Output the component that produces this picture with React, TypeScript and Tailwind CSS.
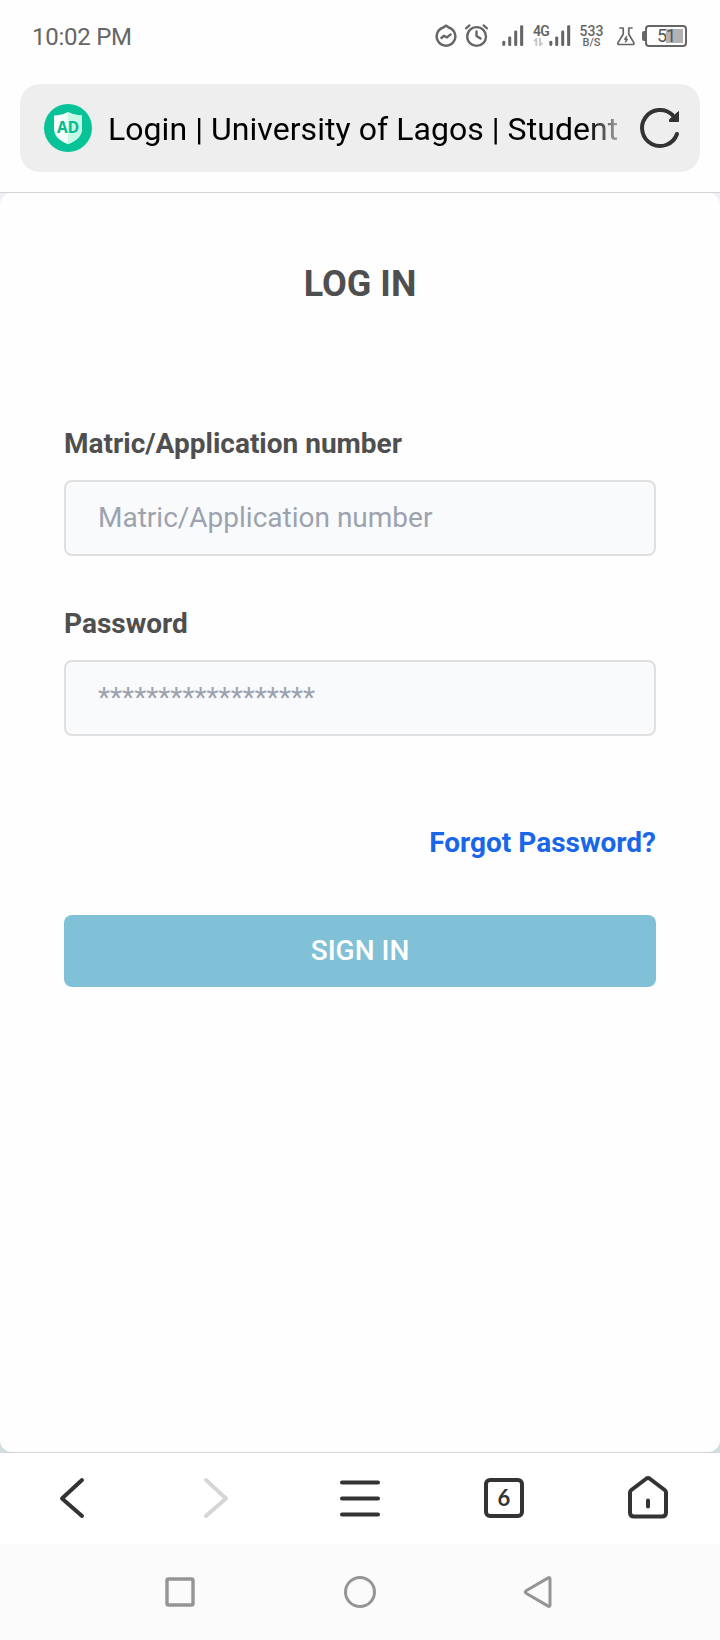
import React from "react";

function SignalBars() {
  return (
    <svg width="22" height="22" viewBox="0 0 22 22" fill="#666">
      <rect x="0.3" y="16.8" width="3" height="5.2" rx="1.4" />
      <rect x="6.2" y="12.4" width="3" height="9.6" rx="1.2" />
      <rect x="12.2" y="6.6" width="3" height="15.4" rx="1.2" />
      <rect x="18.1" y="1.2" width="3.1" height="20.8" rx="1.2" />
    </svg>
  );
}

function StatusBar() {
  return (
    <header className="flex h-[72px] items-start justify-between pl-8 pr-[33px] text-[#666]">
      <span className="mt-[23px] text-[24px] leading-[28px] tracking-[-0.25px]">10:02 PM</span>
      <div className="mt-6 flex h-6 items-start">
        <svg width="24" height="24" viewBox="0 0 24 24" fill="none" stroke="#666" strokeWidth="2.4" strokeLinecap="round" strokeLinejoin="round">
          <path d="M9.3 3.5 12 1.6l2.7 1.9A9.3 9.3 0 1 1 9.3 3.5Z" />
          <path d="M7.4 14 9.8 11.800 13 13.400 16.700 10.400" strokeWidth="2.4" />
        </svg>
        <svg className="ml-[6px]" width="26" height="24" viewBox="0 0 26 24" fill="none" stroke="#666" strokeWidth="2.4" strokeLinecap="round">
          <circle cx="12.6" cy="12.5" r="9.4" />
          <path d="M12.5 7.5V12l4 2.6" strokeLinejoin="round" />
          <path d="M2 4.3 5.4 1.4M19.6 1.4 23 4.3" strokeWidth="2.2" />
        </svg>
        <span className="ml-[12px]"><SignalBars /></span>
        <div className="ml-[9px] flex w-[16px] flex-col">
          <span className="mt-[1px] whitespace-nowrap text-[14px] font-semibold leading-[13px] tracking-[-0.7px]">4G</span>
          <svg width="12" height="8" viewBox="0 0 12 8" fill="none" stroke="#c6c6c6" strokeWidth="1.9">
            <path d="M3.3 8V1.2L1 3M7 0v7.2L9.4 5" />
          </svg>
        </div>
        <SignalBars />
        <div className="ml-[8px] flex w-[25px] flex-col items-center">
          <span className="mt-[1px] text-[14px] font-medium leading-[13px]">533</span>
          <span className="text-[11px] font-medium leading-[10px]">B/S</span>
        </div>
        <svg className="ml-[12px]" width="20" height="24" viewBox="0 0 20 24" fill="none" stroke="#666" strokeWidth="1.7" strokeLinecap="round" strokeLinejoin="round">
          <path d="M4 4h3.2v6.2L2 18.6Q1.2 20.5 3.2 20.5H16.6Q18.6 20.5 17.8 18.6L12.8 10.2V4H16" />
          <path d="M10.6 12.600 8.800 15.2h2.500L9.500 17.800" strokeWidth="1.500" />
        </svg>
        <div className="ml-[6px] mt-[1px] flex items-center">
          <span className="h-[10px] w-[3px] rounded-l-[2px] bg-[#666]" />
          <div className="flex h-[22px] w-[42px] items-center justify-end rounded-[4px] border-2 border-[#666] pr-[2px] text-[18px] leading-[18px] text-[#555]">
            <span className="w-[9px]">5</span>
            <span className="h-[14px] w-[17px] bg-[#b2b2b2] leading-[14px]">1</span>
          </div>
        </div>
      </div>
    </header>
  );
}

function AddressBar() {
  return (
    <div className="mx-5 mt-3 flex h-[88px] items-center rounded-[20px] bg-[#eeeeee] pl-6 pr-5">
      <svg width="48" height="48" viewBox="0 0 48 48">
        <circle cx="24" cy="24" r="24" fill="#07c397" />
        <path d="M24 8c4 2.600 9 3.200 14 3.400V24c0 8-5 12.500-14 16.300C15 36.500 10 32 10 24V11.400C15 11.200 20 10.600 24 8Z" fill="#f4fffb" />
        <path d="M24 8c4 2.600 9 3.200 14 3.400V24c0 8-5 12.500-14 16.300Z" fill="#c4fae5" />
        <text x="24" y="28.600" textAnchor="middle" fontFamily="Noto Sans" fontWeight="700" fontSize="15.500" fill="#0cb98d">AD</text>
      </svg>
      <div className="ml-4 mt-[2px] w-[510px] overflow-hidden whitespace-nowrap bg-gradient-to-r from-black from-[93%] to-[#aaaaaa] bg-clip-text text-[32px] leading-[44px] tracking-[0.05px] text-transparent">
        Login | University of Lagos | Student
      </div>
      <svg className="ml-auto" width="44" height="44" viewBox="0 0 44 44" fill="none">
        <path d="M41 28A18 18 0 1 1 36.500 9" stroke="#333" strokeWidth="4" strokeLinecap="round" />
        <path d="M42.500 5.600V15.500H33.500V13.500Z" fill="#333" stroke="#333" strokeWidth="1" strokeLinejoin="round" />
      </svg>
    </div>
  );
}

function Field({ id, label, placeholder }: { id: string; label: string; placeholder: string }) {
  return (
    <div className="flex flex-col">
      <label htmlFor={id} className="text-[28px] font-bold leading-[40px] text-[#4f4f4f]">{label}</label>
      <input
        id={id}
        placeholder={placeholder}
        className="mt-[16px] h-[76px] w-full rounded-lg border-2 border-[#e0e0e0] bg-[#f9fafc] px-8 pb-[2px] text-[28px] text-[#4f4f4f] outline-none placeholder:text-[#9ca3af]"
      />
    </div>
  );
}

function LoginPage() {
  return (
    <div className="h-[1261px] border-y border-[#d3d6d8] bg-gradient-to-b from-[#eef0f5] to-[#d3dee3]">
      <main className="flex h-full flex-col rounded-[12px] bg-[#fefefe] px-16">
        <h1 className="mt-[67px] text-center text-[36px] font-bold leading-[48px] text-[#4f4f4f]">LOG IN</h1>
        <form className="mt-[116px] flex flex-col">
          <Field id="matric" label="Matric/Application number" placeholder="Matric/Application number" />
          <div className="mt-[48px] flex flex-col">
            <Field id="password" label="Password" placeholder="******************" />
          </div>
          <a href="#" className="mt-[87px] self-end text-[28px] font-bold leading-[40px] text-[#1967e8]">Forgot Password?</a>
          <button type="button" className="mt-[52px] h-[72px] rounded-lg bg-[#81c1d7] text-[28px] font-medium leading-[40px] text-white">SIGN IN</button>
        </form>
      </main>
    </div>
  );
}

function BrowserNav() {
  return (
    <nav className="grid h-[91px] grid-cols-5 items-center justify-items-center bg-white pb-[2px]">
      <svg width="48" height="48" viewBox="0 0 48 48" fill="none" stroke="#333" strokeWidth="4" strokeLinecap="round" strokeLinejoin="round">
        <path d="M34 6 14 24.500 34 42" />
      </svg>
      <svg width="48" height="48" viewBox="0 0 48 48" fill="none" stroke="#d6d6d6" strokeWidth="4" strokeLinecap="round" strokeLinejoin="round">
        <path d="M14 6 34 24.500 14 42" />
      </svg>
      <svg width="48" height="48" viewBox="0 0 48 48" fill="none" stroke="#333" strokeWidth="4" strokeLinecap="round">
        <path d="M6 8.500H42M6 24.500H42M6 40.500H42" />
      </svg>
      <div className="flex h-10 w-10 items-center justify-center rounded-[6px] border-4 border-[#333] font-['Lato',sans-serif] text-[22px] font-bold leading-[24px] text-[#333]">
        6
      </div>
      <svg width="48" height="48" viewBox="0 0 48 48" fill="none" stroke="#333" strokeWidth="4" strokeLinecap="round" strokeLinejoin="round">
        <path d="M6 38.500V18.500Q6 17 7.300 16L22.500 4.500Q24 3.500 25.500 4.500L40.700 16Q42 17 42 18.500V38.500Q42 42.500 38 42.500H10Q6 42.500 6 38.500Z" />
        <path d="M24 26.500V32.500" />
      </svg>
    </nav>
  );
}

function SystemNav() {
  return (
    <nav className="grid h-24 grid-cols-3 items-center justify-items-center bg-[#fbfbfb] px-[90px]">
      <svg width="36" height="36" viewBox="0 0 36 36" fill="none" stroke="#959595" strokeWidth="3.400">
        <rect x="5" y="5" width="26" height="26" rx="1.500" />
      </svg>
      <svg width="36" height="36" viewBox="0 0 36 36" fill="none" stroke="#959595" strokeWidth="3">
        <circle cx="18" cy="18" r="14.500" />
      </svg>
      <svg width="36" height="36" viewBox="0 0 36 36" fill="none" stroke="#959595" strokeWidth="3" strokeLinejoin="round">
        <path d="M4.100 16.700 26.200 3.900Q28 3 28 5V31Q28 33 26.200 32.100L4.100 19.300Q2.300 18 4.100 16.700Z" />
      </svg>
    </nav>
  );
}

export default function App() {
  return (
    <div className="flex h-[1640px] w-[720px] flex-col overflow-hidden bg-[#fefefe] font-['Roboto',sans-serif]">
      <StatusBar />
      <AddressBar />
      <div className="mt-5">
        <LoginPage />
      </div>
      <BrowserNav />
      <SystemNav />
    </div>
  );
}
